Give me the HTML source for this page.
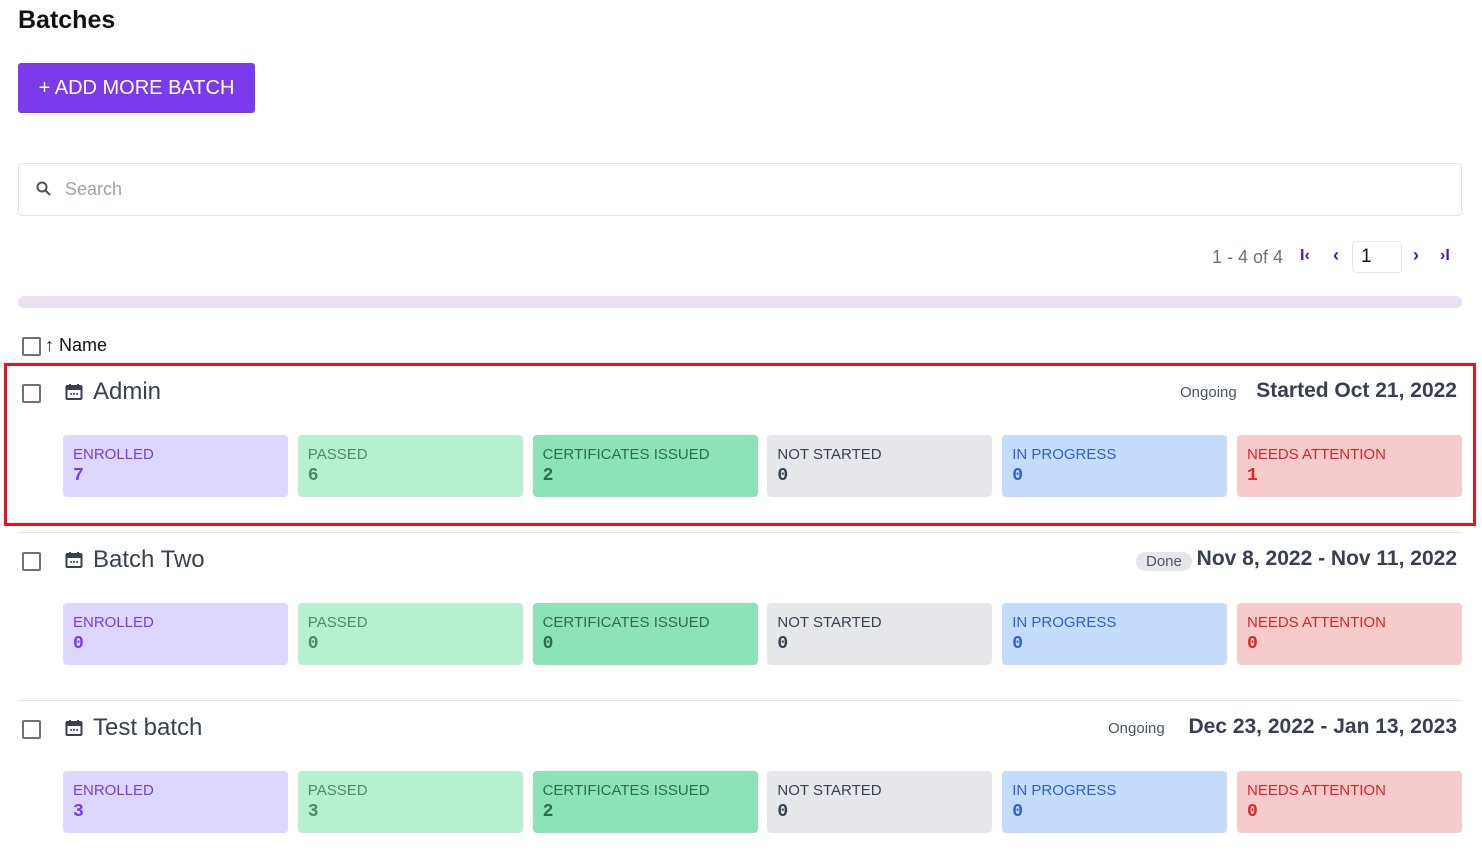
<!DOCTYPE html><html><head><style>
body{margin:0;width:1482px;height:851px;background:#fff;font-family:"Liberation Sans",sans-serif;position:relative;overflow:hidden;color:#1f2937}
.a{position:absolute}
h1{position:absolute;left:18px;top:6px;margin:0;font-size:25px;font-weight:bold;color:#111}
.btn{left:18px;top:63px;width:237px;height:50px;background:#7c3aed;color:#fff;border-radius:3px;font-size:20px;line-height:50px;text-align:center}
.search{left:18px;top:163px;width:1442px;height:51px;border:1px solid #e5e7eb;border-radius:4px}
.cb{width:15px;height:15px;border:2px solid #6b7280;border-radius:2px}
.card{position:absolute;width:225px;height:62px;border-radius:4px;font-size:15px}
.card span{position:absolute;left:10px;top:11px}
.card b{position:absolute;left:10px;top:31px;font-size:18px;font-family:"Liberation Mono",monospace}
.title{font-size:24px;color:#374151}
.date{font-size:21px;font-weight:bold;color:#374151}
.st{font-size:15px;color:#4b5563}
</style></head><body>
<h1>Batches</h1>
<div class="a btn">+ ADD MORE BATCH</div>
<div class="a search"><svg class="a" style="left:17px;top:17px" width="16" height="16" viewBox="0 0 16 16"><circle cx="6" cy="6" r="4.5" fill="none" stroke="#555" stroke-width="2"/><path d="M9.5 9.5L14 14" stroke="#555" stroke-width="2.2"/></svg><span class="a" style="left:46px;top:15px;font-size:18px;color:#9ca3af">Search</span></div>
<div class="a" style="left:1212px;top:247px;font-size:18px;color:#6b7280">1 - 4 of 4</div>
<div class="a" style="left:1300px;top:247px;font-size:16px;color:#4c1d95;font-weight:bold">I‹</div>
<div class="a" style="left:1333px;top:245px;font-size:18px;color:#4c1d95;font-weight:bold">‹</div>
<div class="a" style="left:1352px;top:241px;width:48px;height:30px;border:1px solid #e5e7eb;border-radius:4px;font-size:19px;line-height:30px;text-indent:8px;color:#111">1</div>
<div class="a" style="left:1413px;top:245px;font-size:18px;color:#4c1d95;font-weight:bold">›</div>
<div class="a" style="left:1440px;top:247px;font-size:16px;color:#4c1d95;font-weight:bold">›I</div>
<div class="a" style="left:18px;top:296px;width:1444px;height:12px;background:#ebdff2;border-radius:6px"></div>
<div class="a cb" style="left:22px;top:337px"></div>
<div class="a" style="left:45px;top:335px;font-size:18px;color:#111">↑ Name</div>
<div class="a" style="left:4px;top:363px;width:1466px;height:157px;border:3px solid #e5141f"></div>
<div class="a" style="left:18px;top:532px;width:1444px;height:1px;background:#e5e7eb"></div>
<div class="a" style="left:18px;top:700px;width:1444px;height:1px;background:#e5e7eb"></div>
<div id="rows"></div>
<script>
const rows=[[392,"Admin",["7","6","2","0","0","1"],"Ongoing","Started Oct 21, 2022",1180],[560,"Batch Two",["0","0","0","0","0","0"],"Done","Nov 8, 2022 - Nov 11, 2022",1136],[728,"Test batch",["3","3","2","0","0","0"],"Ongoing","Dec 23, 2022 - Jan 13, 2023",1108]];
const cs=[["ENROLLED","#ddd6fe","#7c3aed"],["PASSED","#b7f0d0","#4a8a6a"],["CERTIFICATES ISSUED","#8ce3b8","#2f6b4f"],["NOT STARTED","#e5e7eb","#374151"],["IN PROGRESS","#c4dbfb","#2f5fd8"],["NEEDS ATTENTION","#f5cccb","#dc2626"]];
let h="";
for(const[y,t,v,s,d,sx]of rows){
h+=`<div class="a cb" style="left:22px;top:${y-8}px"></div>
<svg class="a" style="left:65px;top:${y-9}px" width="18" height="18" viewBox="0 0 18 18"><rect x="1.5" y="3" width="15" height="13" rx="1" fill="none" stroke="#374151" stroke-width="2"/><rect x="1.5" y="3" width="15" height="4" fill="#374151"/><path d="M5 1v3M13 1v3" stroke="#374151" stroke-width="2"/><path d="M5 11h2M8 11h2M11 11h2" stroke="#374151" stroke-width="1.5"/></svg>
<div class="a title" style="left:93px;top:${y-14}px">${t}</div>
<div class="a st" style="left:${sx}px;top:${y-8}px;${s=="Done"?"background:#e5e7eb;border-radius:9px;padding:1px 10px;left:"+(sx)+"px;":""}">${s}</div>
<div class="a date" style="right:25px;top:${y-13}px">${d}</div>`;
cs.forEach((c,i)=>{h+=`<div class="card" style="left:${63+i*234.8}px;top:${y+43}px;background:${c[1]};color:${c[2]}"><span>${c[0]}</span><b>${v[i]}</b></div>`});
}
document.getElementById("rows").innerHTML=h;
</script>
</body></html>
